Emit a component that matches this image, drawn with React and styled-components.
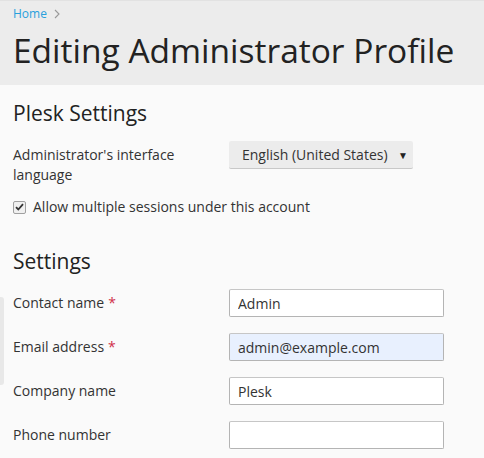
import React from 'react';
import styled, { createGlobalStyle } from 'styled-components';

const GlobalStyle = createGlobalStyle`
  html, body {
    margin: 0;
    padding: 0;
    background: #fafafa;
  }
  body {
    font-family: "Open Sans", "Liberation Sans", sans-serif;
    color: #333;
  }
`;

const Page = styled.div`
  position: relative;
  min-height: 458px;
  background: #fafafa;
`;

const Header = styled.header`
  background: #ececec;
  border-top: 1px solid #e2e2e2;
  padding: 5px 13px 14px;
`;

const Breadcrumbs = styled.nav`
  display: flex;
  align-items: center;
  gap: 6px;
  font-size: 12px;
  line-height: 16px;
  a {
    color: #28a0dc;
    text-decoration: none;
  }
`;

const Chevron = styled.svg`
  width: 8px;
  height: 10px;
`;

const Title = styled.h1`
  margin: 7px 0 0;
  font-size: 33.5px;
  font-weight: 400;
  line-height: 42px;
  color: #222;
  white-space: nowrap;
`;

const Content = styled.main`
  padding: 14px 13px 0;
`;

const Section = styled.section`
  margin-bottom: 30px;
`;

const SectionTitle = styled.h2`
  margin: 0 0 14px;
  font-size: 21px;
  font-weight: 400;
  line-height: 28px;
  color: #222;
`;

const Row = styled.div`
  display: grid;
  grid-template-columns: 216px 1fr;
  align-items: ${(p) => (p.$top ? 'start' : 'center')};
  min-height: 27px;
  margin-bottom: ${(p) => p.$gap || 17}px;
`;

const Label = styled.label`
  font-size: 14px;
  line-height: 20px;
  color: #333;
  padding-right: 20px;
  margin-top: ${(p) => p.$offset || 0}px;
`;

const Required = styled.span`
  color: #d0304a;
  margin-left: 4px;
`;

const SelectBox = styled.div`
  display: flex;
  align-items: center;
  justify-content: space-between;
  width: 184px;
  height: 28px;
  box-sizing: border-box;
  padding: 0 5px 0 13px;
  background: #ececec;
  border-bottom: 1px solid #c8c8c8;
  border-radius: 2px;
  font-size: 14px;
  color: #333;
`;

const Caret = styled.span`
  font-size: 10px;
  color: #222;
`;

const CheckRow = styled.label`
  display: flex;
  align-items: center;
  gap: 7px;
  font-size: 14px;
  line-height: 20px;
  color: #333;
`;

const Check = styled.span`
  width: 11px;
  height: 11px;
  border: 1px solid #a0a0a0;
  border-radius: 2px;
  background: #f0f0f0;
  display: flex;
  align-items: center;
  justify-content: center;
`;

const Input = styled.input`
  width: 215px;
  height: 28px;
  box-sizing: border-box;
  border: 1px solid #b4b4b4;
  border-top-color: #c6c6c6;
  border-radius: 2px;
  padding: 0 8px;
  font-family: "Open Sans", "Liberation Sans", sans-serif;
  font-size: 14px;
  color: #333;
  background: ${(p) => (p.$autofill ? '#e8f0fe' : '#fff')};
  outline: none;
`;

const SideHandle = styled.div`
  position: absolute;
  left: 0;
  top: 297px;
  width: 4px;
  height: 88px;
  background: #e8e8e8;
  border-radius: 0 3px 3px 0;
`;

const fields = [
  { label: 'Contact name', value: 'Admin', required: true },
  { label: 'Email address', value: 'admin@example.com', required: true, autofill: true },
  { label: 'Company name', value: 'Plesk' },
  { label: 'Phone number', value: '' },
];

export default function App() {
  return (
    <Page>
      <GlobalStyle />
      <Header>
        <Breadcrumbs>
          <a href="#">Home</a>
          <Chevron viewBox="0 0 8 10">
            <path d="M2 1l4 4-4 4" fill="none" stroke="#999" strokeWidth="1.1" />
          </Chevron>
        </Breadcrumbs>
        <Title>Editing Administrator Profile</Title>
      </Header>
      <Content>
        <Section>
          <SectionTitle>Plesk Settings</SectionTitle>
          <Row $top $gap={12}>
            <Label $offset={4}>Administrator's interface language</Label>
            <SelectBox>
              <span>English (United States)</span>
              <Caret>▼</Caret>
            </SelectBox>
          </Row>
          <CheckRow>
            <Check>
              <svg width="9" height="8" viewBox="0 0 9 8">
                <path d="M1 4.2l2.3 2.3L8 1.2" fill="none" stroke="#333" strokeWidth="1.8" />
              </svg>
            </Check>
            Allow multiple sessions under this account
          </CheckRow>
        </Section>
        <Section>
          <SectionTitle>Settings</SectionTitle>
          {fields.map((f) => (
            <Row key={f.label} $gap={16}>
              <Label>
                {f.label}
                {f.required && <Required>*</Required>}
              </Label>
              <Input defaultValue={f.value} $autofill={f.autofill} />
            </Row>
          ))}
        </Section>
      </Content>
      <SideHandle />
    </Page>
  );
}
